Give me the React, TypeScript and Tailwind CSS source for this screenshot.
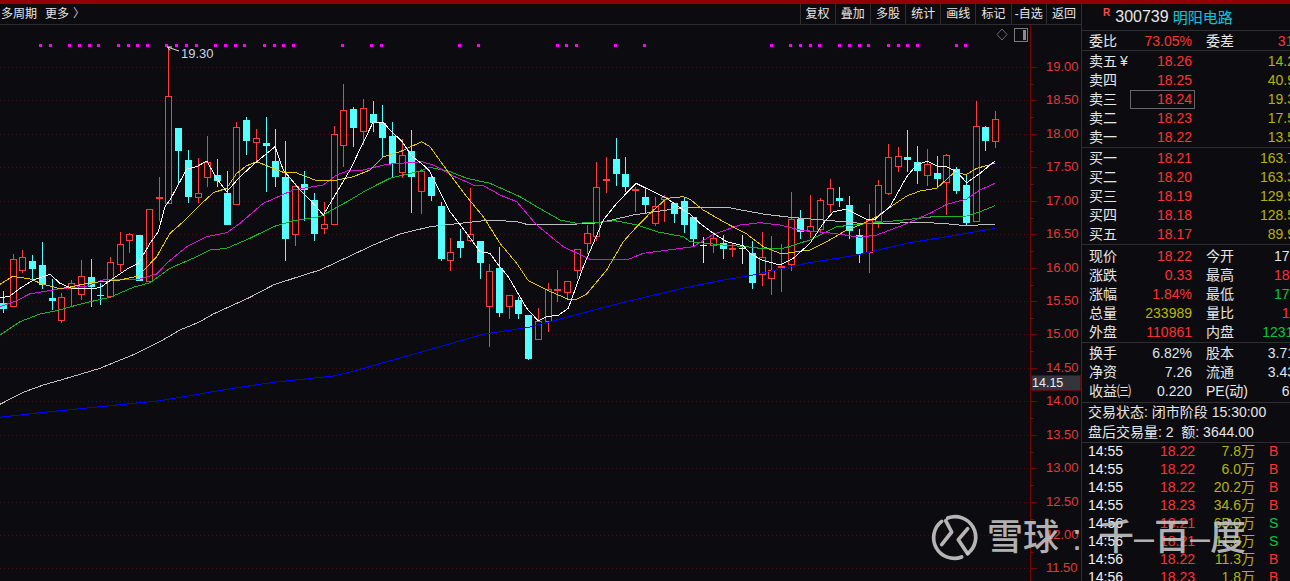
import React from "react";

const FONT = { fontFamily: '"Liberation Sans","Noto Sans CJK SC",sans-serif' };
const RED = "#ff3b3b";
const CY = "#54ffff";
type C = [number, number, number, number, number]; // color(0 red,1 cyan,2 white), hi, bodyTop, bodyBot, lo
const candles: C[] = [
[1,291,303,309,313],[0,254,259,307,307],[0,250,257,271,273],[1,255,261,269,279],[1,242,265,285,289],[1,279,298,301,310],[0,293,297,321,323],[0,280,283,289,306],[0,260,276,295,300],[1,259,277,287,307],[1,283,295,296,305],[0,257,262,297,298],[0,232,244,265,272],[0,233,234,241,253],[1,235,235,281,281],[0,209,209,282,282],[0,177,197,199,221],[0,47,96,204,204],[1,128,128,151,183],[1,150,160,197,203],[0,158,193,198,203],[0,136,162,178,187],[1,159,175,181,187],[1,171,193,225,225],[0,122,127,205,205],[1,117,120,141,155],[0,129,138,143,163],[1,117,143,146,192],[1,129,161,177,187],[1,141,177,239,261],[0,183,186,235,246],[1,171,184,190,221],[1,193,200,234,241],[0,202,224,229,234],[0,126,134,225,225],[0,84,110,146,167],[1,107,109,128,147],[0,99,108,132,145],[1,101,114,123,132],[1,105,123,138,157],[1,122,136,164,177],[0,139,155,173,178],[1,130,151,177,213],[0,169,171,192,214],[1,175,177,196,201],[1,202,206,259,261],[0,238,252,261,271],[1,229,241,248,258],[0,188,234,241,242],[1,241,241,263,279],[0,264,271,307,347],[1,247,268,313,317],[0,295,295,307,319],[1,297,300,314,319],[1,315,315,359,360],[0,308,321,340,340],[0,283,289,322,332],[0,270,289,291,302],[0,281,281,293,300],[0,249,249,271,279],[0,225,233,244,254],[0,162,187,237,241],[0,157,179,181,193],[1,138,159,174,186],[1,157,174,187,192],[0,187,189,191,212],[1,188,197,205,213],[0,197,206,224,226],[0,195,197,200,222],[1,203,203,214,223],[1,197,201,225,233],[1,217,217,239,247],[2,237,245,246,263],[0,232,238,246,253],[1,235,243,249,259],[0,243,248,250,257],[2,235,248,249,264],[1,241,253,283,289],[0,232,257,275,286],[0,236,270,279,295],[0,244,266,268,292],[0,192,219,265,271],[1,210,219,232,239],[0,195,226,232,238],[0,198,200,230,233],[0,179,188,205,213],[1,187,198,201,207],[1,196,205,231,239],[1,229,235,254,263],[0,204,220,253,273],[0,180,185,222,228],[0,144,157,194,195],[0,147,156,167,172],[1,130,157,160,172],[1,146,162,171,184],[0,149,164,176,186],[1,156,173,179,188],[0,154,155,183,215],[1,167,169,191,194],[1,175,185,223,225],[0,101,126,222,222],[1,126,127,141,151],[0,111,119,142,148],
];

// traced segments: [originX, originY, flat zoomed x,y pairs]; every zoom crop is 3x.
type Seg = [number, number, number[]];
const path = (segs: Seg[]) => {
  const out: string[] = [];
  let last = -1;
  segs.forEach(([ox, oy, p]) => {
    for (let i = 0; i < p.length; i += 2) {
      const x = ox + p[i] / 3;
      const y = oy + p[i + 1] / 3;
      if (x > last) {
        out.push(`${x.toFixed(1)},${y.toFixed(1)}`);
        last = x;
      }
    }
  });
  return out.join(" ");
};
const lines: { c: string; s: Seg[] }[] = [
  { c: "#0000ff", s: [[0,190,[0,682,120,668,300,650,480,632,700,595,820,577,1000,558,1050,546]],[350,90,[30,838,200,790,400,733,540,711,650,682,780,647,900,618,1020,590]],[690,90,[0,588,90,572,190,555,350,520,500,495,650,460,800,435,915,415]]] },
  { c: "#bdbdbd", s: [[0,190,[0,643,70,607,130,585,210,562,300,535,410,490,480,455,540,420,600,395,640,372,750,322,820,285,890,262,960,240,1050,198]],[350,90,[0,495,70,465,150,432,240,410,330,400,420,390,500,395,530,403,630,405,750,398,850,375,950,360,1020,352]],[690,90,[0,352,60,353,110,352,220,372,300,382,460,395,530,402,700,397,790,403,830,408,900,402,915,403]]] },
  { c: "#18b42a", s: [[0,190,[0,435,60,395,120,372,170,362,250,340,330,322,400,292,450,278,510,235,590,200,630,180,680,175,750,145,820,110,880,92,960,80,1050,30]],[350,90,[0,328,50,300,120,265,210,243,240,232,300,245,350,265,420,280,510,320,560,350,630,390,680,400,770,395,795,392,860,405,920,425,1000,440]],[690,90,[0,455,100,465,170,470,210,475,280,475,360,450,440,410,540,400,640,390,730,380,830,378,870,365,915,347]]] },
  { c: "#d414d4", s: [[0,190,[0,350,50,332,90,311,130,305,180,296,260,288,310,270,360,267,410,270,470,252,500,220,560,170,620,140,680,128,720,100,790,40,880,0]],[0,0,[970,555,1010,525,1050,510,1090,510,1160,493,1265,485]],[350,90,[0,238,50,242,100,228,160,222,210,215,250,225,310,258,370,285,400,287,450,315,500,335,560,405,640,470,720,508,830,510,880,490,1030,470]],[690,90,[0,455,70,433,150,405,210,398,270,405,330,420,430,430,510,442,560,435,640,405,720,370,770,343,830,327,870,300,915,280]]] },
  { c: "#e6c800", s: [[0,190,[0,283,38,259,90,267,130,283,180,296,215,290,270,278,360,270,415,258,470,200,510,130,550,95,600,45,640,8]],[0,0,[680,565,710,520,740,497,770,485,850,517,885,517,945,540,1000,542,1060,530,1110,510,1150,470,1200,455,1265,425]],[350,90,[0,262,30,250,100,205,150,190,213,154,240,170,290,240,350,320,400,380,450,460,500,520,535,572,590,600,655,628,680,628,710,612,770,540,820,455,860,410,900,370,950,325,1000,320]],[690,90,[0,328,40,360,100,395,170,432,220,470,275,492,320,485,360,480,410,455,470,420,510,405,560,380,610,345,650,318,690,303,740,295,790,250,830,253,860,235,915,220]]] },
  { c: "#ffffff", s: [[0,190,[0,324,30,318,60,295,100,270,150,253,180,280,215,295,260,297,300,293,340,265,385,235,415,220,450,160,475,125,495,50]],[0,0,[510,600,560,507,590,500,620,483,650,535,680,575,720,530,770,485,825,440,850,510,900,570,930,600]],[0,190,[970,75]],[350,90,[0,240,70,95,100,98,130,130,155,153,185,198,220,225,240,245,300,365,350,430,390,485,420,490,445,525,475,560,530,655,565,693,590,680,625,676,655,655,700,530,760,390,800,340,858,280,950,325,1000,360]],[690,90,[0,372,30,400,70,430,110,455,160,467,180,490,215,510,270,525,310,505,360,460,400,400,430,365,470,357,500,373,530,388,555,388,600,350,650,260,680,225,712,213,740,228,770,230,800,245,830,278,870,250,915,213]]] },
];

const dots = [40,50,69,79,89,98,118,128,137,147,166,176,186,196,215,225,235,244,264,274,283,293,342,371,381,459,478,557,566,576,615,644,771,790,800,810,819,839,849,859,868,888,898,907,917,956,965];
const gridY = Array.from({ length: 16 }, (_, i) => Math.round(67 + i * 33.43));
const prices = ["19.00","18.50","18.00","17.50","17.00","16.50","16.00","15.50","15.00","14.50","14.00","13.50","13.00","12.50","12.00","11.50"];

function Chart() {
  return (
    <svg width={1081} height={556} viewBox="0 25 1081 556" className="block">
      {gridY.map((y) => (
        <line key={y} x1={0} x2={1030} y1={y + 0.5} y2={y + 0.5} stroke="#421010" strokeDasharray="1 3" shapeRendering="crispEdges" />
      ))}
      {dots.map((x) => (
        <rect key={x} x={x - 1} y={44} width={3} height={3} fill="#ff00ff" />
      ))}
      {candles.map((c, i) => {
        const x = Math.round(3 + 9.725 * i);
        const col = c[0] === 0 ? RED : c[0] === 1 ? CY : "#e6e6e6";
        const h = c[3] - c[2];
        return (
          <g key={i} shapeRendering="crispEdges">
            {c[0] === 0 ? (
              <>
                <line x1={x + 0.5} x2={x + 0.5} y1={c[1]} y2={c[2]} stroke={col} />
                <line x1={x + 0.5} x2={x + 0.5} y1={c[3]} y2={c[4]} stroke={col} />
                <rect x={x - 2.5} y={c[2] + 0.5} width={6} height={Math.max(h - 1, 1)} fill="none" stroke={col} />
              </>
            ) : (
              <>
                <line x1={x + 0.5} x2={x + 0.5} y1={c[1]} y2={c[4]} stroke={col} />
                <rect x={x - 3} y={c[2]} width={7} height={Math.max(h, 1)} fill={col} />
              </>
            )}
          </g>
        );
      })}
      {lines.map((l) => (
        <polyline key={l.c} points={path(l.s)} fill="none" stroke={l.c} strokeWidth={1} shapeRendering="crispEdges" />
      ))}
      <path d="M167.5 47 L179 51 M167.5 47 L172 47 M167.5 47 L170 50.5" fill="none" stroke="#dddddd" />
      <text x={181} y={58} fill="#c9d6e6" fontSize={13} style={FONT}>19.30</text>
      <path d="M1002 29 L1007 34.5 L1002 40 L997 34.5 Z" fill="none" stroke="#6a6a6a" />
      <rect x={1014.5} y={28.5} width={13} height={13} fill="none" stroke="#7a7a7a" />
      <rect x={1023} y={30} width={3} height={10} fill="#8a8a8a" />
      <line x1={1030.5} x2={1030.5} y1={25} y2={581} stroke="#7a0505" />
      {gridY.map((y) => (
        <line key={`t${y}`} x1={1030} x2={1037} y1={y + 0.5} y2={y + 0.5} stroke="#7a0505" />
      ))}
      {gridY.slice(0, 15).map((y) => (
        <line key={`m${y}`} x1={1030} x2={1034} y1={y + 17.5} y2={y + 17.5} stroke="#7a0505" />
      ))}
      {prices.map((p, i) => (
        <text key={p} x={1046} y={gridY[i] + 4} fill="#e03a3a" fontSize={13} style={FONT}>{p}</text>
      ))}
      <rect x={1031.5} y={375.5} width={49} height={15} fill="#34343c" stroke="#5a0a0a" />
      <text x={1032} y={387} fill="#e8eef5" fontSize={12.5} style={FONT}>14.15</text>
    </svg>
  );
}

const V1 = "#ff3232";
const YL = "#b8b800";
const G = "#00c840";
const W = "#dfe6ee";

function Quotes({ rows }: { rows: { l: string; p: string; v: string; box?: boolean; y?: boolean }[] }) {
  return (
    <div className="h-[97px] shrink-0 flex flex-col justify-center border-b border-[#2e2e2e]">
      {rows.map((r) => (
        <div key={r.l} className="h-[19px] flex items-center pl-[7px] whitespace-nowrap">
          <span className="w-[41px] shrink-0 text-[#e6e6e6]">{r.l}{r.y ? <span className="ml-[3px]">¥</span> : null}</span>
          <span className={`w-[65px] h-[19px] shrink-0 text-right text-[#ff3232] pr-[2px] leading-[17px] border ${r.box ? "border-[#666]" : "border-transparent"}`}>{r.p}</span>
          <span className="w-[114px] shrink-0 text-right text-[#b4b400]">{r.v}</span>
        </div>
      ))}
    </div>
  );
}

function Stat({ rows, cls }: { rows: { a: string; b: string; bc: string; c: string; d: string; dc: string }[]; cls: string }) {
  return (
    <div className={`border-b border-[#2e2e2e] shrink-0 flex flex-col justify-center ${cls}`}>
      {rows.map((r) => (
        <div key={r.a} className="h-[19px] flex items-center pl-[7px] whitespace-nowrap">
          <span className="w-[44px] shrink-0 text-[#e6e6e6]">{r.a}</span>
          <span className="w-[60px] shrink-0 text-right pr-[1px]" style={{ color: r.bc }}>{r.b}</span>
          <span className="w-[46px] shrink-0 pl-[13px] text-[#e6e6e6] box-content">{r.c}</span>
          <span className="w-[57px] shrink-0 text-right" style={{ color: r.dc }}>{r.d}</span>
        </div>
      ))}
    </div>
  );
}

export default function App() {
  const trades: [string, string, string, string][] = [
    ["14:55","18.22","7.8万","B"],["14:55","18.22","6.0万","B"],["14:55","18.22","20.2万","B"],["14:55","18.23","34.6万","B"],
    ["14:56","18.21","65.0万","S"],["14:56","18.21","11.8万","S"],["14:56","18.22","11.3万","B"],["14:56","18.23","1.8万","B"],
  ];
  return (
    <div className="w-[1290px] h-[581px] overflow-hidden bg-[#0c0c10] relative text-[14px] leading-none" style={FONT}>
      <div className="h-[4px] bg-[#8f0008]" />
      <div className="flex h-[577px]">
        <div className="w-[1081px] shrink-0 flex flex-col">
          <div className="h-[21px] shrink-0 border-b border-[#2e2e2e] flex items-center justify-between text-[12px] text-[#e6e6e6]">
            <div className="pl-[1px] flex items-center">
              <span>多周期</span>
              <span className="ml-[8px]">更多</span>
              <span className="ml-[4px] text-[#b8c4d8]">〉</span>
            </div>
            <div className="flex h-full">
              {["复权","叠加","多股","统计","画线","标记","-自选","返回"].map((t) => (
                <span key={t} className="w-[35.2px] border-l border-[#2e2e2e] flex items-center justify-center whitespace-nowrap">{t}</span>
              ))}
            </div>
          </div>
          <div className="flex-1 overflow-hidden"><Chart /></div>
        </div>
        <div className="flex-1 border-l border-[#2e2e2e] overflow-hidden flex flex-col text-[#e6e6e6]">
          <div className="h-[27px] shrink-0 border-b border-[#2e2e2e] flex items-center pl-[21px]">
            <span className="text-[10px] font-bold text-[#ff4a4a] mr-[5px] -mt-[8px]">R</span>
            <span className="text-[16px] text-[#e6e6e6]">300739</span>
            <span className="ml-[4px] text-[15px] text-[#00c8e0]">明阳电路</span>
          </div>
          <div className="h-[20px] shrink-0 border-b border-[#2e2e2e] flex items-center pl-[7px] whitespace-nowrap">
            <span className="w-[44px] shrink-0">委比</span>
            <span className="w-[60px] shrink-0 text-right text-[#ff3232] pr-[1px]">73.05%</span>
            <span className="w-[46px] shrink-0 pl-[13px] box-content">委差</span>
            <span className="w-[57px] shrink-0 text-right text-[#ff3232]">3147</span>
          </div>
          <Quotes rows={[
            { l: "卖五", y: true, p: "18.26", v: "14.2万" },{ l: "卖四", p: "18.25", v: "40.9万" },{ l: "卖三", p: "18.24", v: "19.3万", box: true },{ l: "卖二", p: "18.23", v: "17.5万" },{ l: "卖一", p: "18.22", v: "13.5万" },
          ]} />
          <Quotes rows={[
            { l: "买一", p: "18.21", v: "163.7万" },{ l: "买二", p: "18.20", v: "163.3万" },{ l: "买三", p: "18.19", v: "129.9万" },{ l: "买四", p: "18.18", v: "128.5万" },{ l: "买五", p: "18.17", v: "89.9万" },
          ]} />
          <Stat cls="h-[98px]" rows={[
            { a: "现价", b: "18.22", bc: V1, c: "今开", d: "17.89", dc: W },
            { a: "涨跌", b: "0.33", bc: V1, c: "最高", d: "18.51", dc: V1 },
            { a: "涨幅", b: "1.84%", bc: V1, c: "最低", d: "17.75", dc: G },
            { a: "总量", b: "233989", bc: YL, c: "量比", d: "1.08", dc: V1 },
            { a: "外盘", b: "110861", bc: V1, c: "内盘", d: "123128", dc: G },
          ]} />
          <Stat cls="h-[60px] pb-[2px]" rows={[
            { a: "换手", b: "6.82%", bc: W, c: "股本", d: "3.71亿", dc: W },
            { a: "净资", b: "7.26", bc: W, c: "流通", d: "3.43亿", dc: W },
            { a: "收益㈢", b: "0.220", bc: W, c: "PE(动)", d: "62.8", dc: W },
          ]} />
          <div className="h-[40px] shrink-0 border-b border-[#2e2e2e] flex flex-col justify-center gap-[6px] pl-[6px] pb-[2px] text-[14px] text-[#e6e6e6] whitespace-nowrap">
            <div>交易状态: 闭市阶段 15:30:00</div>
            <div>盘后交易量: 2&nbsp;&nbsp;额: 3644.00</div>
          </div>
          <div className="-mt-px">
            {trades.map((t, i) => (
              <div key={i} className="h-[18px] flex items-center pl-[6px] whitespace-nowrap">
                <span className="w-[50px] text-[#f0f0f0]">{t[0]}</span>
                <span className="w-[57px] text-right text-[#ff3232]">{t[1]}</span>
                <span className="w-[60px] text-right text-[#b4b400]">{t[2]}</span>
                <span className={`ml-[14px] ${t[3] === "B" ? "text-[#ff3232]" : "text-[#00c840]"}`}>{t[3]}</span>
              </div>
            ))}
          </div>
        </div>
      </div>
      <div className="absolute left-[930px] top-[513px] flex items-center text-[36px] font-medium text-[#c8c8c8]/90 pointer-events-none whitespace-nowrap">
        <svg width="50" height="50" viewBox="15 25 150 150" fill="none" stroke="currentColor" strokeWidth="11" strokeLinecap="round" strokeLinejoin="round" className="mr-[7px]">
          <path d="M68 40 A62 62 0 0 1 128 147" />
          <path d="M110 157 A62 62 0 0 1 50 50" />
          <path d="M62 48 L80 82 L50 120" />
          <path d="M128 72 L100 105 L128 147" />
        </svg>
        <span>雪球</span>
        <span className="ml-[13px] mr-[16px]">:</span>
        <span>千–百–度</span>
      </div>
    </div>
  );
}
